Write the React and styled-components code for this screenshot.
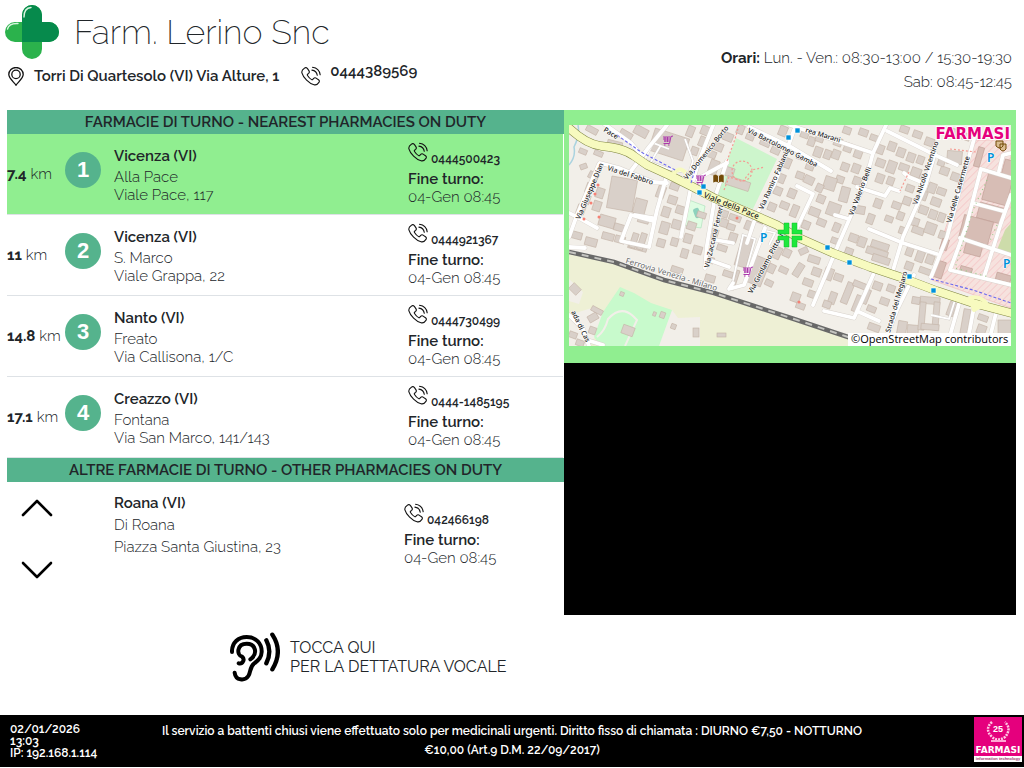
import React from "react";
import styled, { createGlobalStyle } from "styled-components";

const pharmacies = [
  { km: "7.4", city: "Vicenza (VI)", name: "Alla Pace", street: "Viale Pace, 117", phone: "0444500423" },
  { km: "11", city: "Vicenza (VI)", name: "S. Marco", street: "Viale Grappa, 22", phone: "0444921367" },
  { km: "14.8", city: "Nanto (VI)", name: "Freato", street: "Via Callisona, 1/C", phone: "0444730499" },
  { km: "17.1", city: "Creazzo (VI)", name: "Fontana", street: "Via San Marco, 141/143", phone: "0444-1485195" },
];

const PhoneIcon = () => (
  <svg width="20" height="20" viewBox="0 0 20 20" fill="none" stroke="#111" strokeWidth="1.1" strokeLinecap="round" strokeLinejoin="round">
    <path d="M3.4 2.2C4.6 1.2 5.7 1.5 6.5 2.6L8 4.9C8.6 5.9 8.4 6.7 7.6 7.4L6.6 8.2C6.2 8.6 6.2 9 6.5 9.5C7.5 11.1 8.9 12.6 10.6 13.6C11.1 13.9 11.5 13.8 11.8 13.4L12.7 12.4C13.4 11.7 14.1 11.6 15 12.1L17.5 13.7C18.5 14.4 18.6 15.4 17.9 16.4C16.8 18.2 15 19.2 13 18.7C10.4 18.1 7.8 16.3 5.6 14.1C3.3 11.8 1.5 9.1.9 6.8C.5 4.9 1.7 3.2 3.4 2.2Z" />
    <path d="M11.5 1.2C15.6 1.7 18.6 4.7 19.2 8.8M10.9 4.1C13.9 4.5 15.9 6.6 16.3 9.3" />
  </svg>
);

const PinIcon = () => (
  <svg width="16" height="19" viewBox="0 0 16 19" fill="none" stroke="#111" strokeWidth="1.3">
    <path d="M8 18.2C6.6 15.6.8 11.7.8 7.6A7.2 7.1 0 0 1 15.2 7.6C15.2 11.7 9.4 15.6 8 18.2Z" />
    <circle cx="8" cy="7.4" r="4.2" />
  </svg>
);

const CrossLogo = () => (
  <svg width="54" height="54" viewBox="0 0 54 54">
    <path d="M17 17V10A10 10 0 0 1 37 10V17H44A10 10 0 0 1 44 37H37V44A10 10 0 0 1 17 44V37H10A10 10 0 0 1 10 17Z" fill="#2bb24c" />
    <path d="M17 37V10A10 10 0 0 1 37 10V17H44A10 10 0 0 1 44 37Z" fill="#068a4c" />
    <path d="M19 12Q19 3 26 2.5M2.5 24Q4 18 13 18.5" fill="none" stroke="#d9f5df" strokeWidth="1.4" strokeLinecap="round" />
  </svg>
);

const EarIcon = () => (
  <svg width="50" height="50" viewBox="90 50 150 150" fill="none" stroke="#000" strokeWidth="12" strokeLinecap="round">
    <path d="M96 110C95 82 115 65 140 65C168 65 186 85 185 110C184 128 175 134 163 144C148 156 153 170 145 182C134 198 107 196 104 172" />
    <path d="M116 144C128 147 136 132 126 124C109 119 110 85 140 85C168 85 174 116 151 132" />
    <path d="M199 75Q217 108 199 144M217 58Q250 108 217 162" strokeWidth="13" />
  </svg>
);

const Chevron = ({ down }) => (
  <svg width="32" height="18" viewBox="0 0 32 18" fill="none" stroke="#000" strokeWidth="2.6" strokeLinecap="round" strokeLinejoin="round">
    <path d={down ? "M2 2L16 16L30 2" : "M2 16L16 2L30 16"} />
  </svg>
);

// minor streets of the map
const streets = [
  "M34 -2L62 18L72 30", "M30 39L8 90L0 112", "M31 38L50 43L84 57L98 58", "M62 46L80 22L98 0", "M0 88L12 94L28 103",
  "M98 50L88 85L80 122L52 116L62 90L84 96", "M66 90L84 93", "M145 -2L130 36L122 62L112 112", "M128 54L150 42L158 38",
  "M158 36L146 72L138 120L136 143", "M225 5L205 60L188 88L178 118", "M180 2L222 22L262 46", "M221 0L304 28L318 -2",
  "M304 28L296 58L270 118L244 180", "M318 6L366 30L388 40", "M366 28L356 62L334 112L322 152", "M405 14L392 60L378 112L362 152",
  "M228 61L244 69L228 103", "M288 62L316 71L321 63L330 66", "M335 48L340 52L352 57", "M300 104L334 118L368 129",
  "M266 90L280 94", "M305 148L285 193L255 186M290 187L310 196", "M345 150L328 185L314 221", "M392 172L380 214",
  "M405 182L398 220", "M428 184L422 208", "M196 103L175 160L160 164L164 158", "M0 122L16 123", "M0 190L14 204L20 221M18 215L34 220",
  "M147 115L164 118M143 136L160 142",
  "M412 44L442 53M412 44L397 102L381 145L442 160M404 78L434 86M391 113L424 124M442 70L432 98L415 152M424 124L442 130M442 28L434 30L430 46",
];

const parkingLines = "M74 38L84 18L100 24M80 40L92 20M78 36L100 44L120 48L124 36L116 14M96 50L112 54L128 48M162 165L174 110L186 114L176 150M194 105L206 108L200 120M386 175L380 194L362 190";

// x, y, width, height, rotation
const buildings = [
  [82, 8, 36, 23, 18], [40, 53, 26, 32, 10], [50, 6, 13, 9, 30], [65, 2, 14, 9, 28], [38, 16, 15, 8, 14], [17, 2, 12, 6, 28],
  [10, 24, 8, 5, 22], [25, 26, 9, 5, 22], [11, 39, 7, 5, -20], [21, 46, 7, 10, -62], [17, 58, 7, 10, 20], [14, 70, 7, 9, 20],
  [8, 80, 8, 9, 20], [27, 63, 8, 10, 18], [24, 76, 8, 10, 18], [30, 91, 16, 11, 16], [45, 99, 10, 7, 16], [65, 74, 12, 15, 15],
  [69, 91, 11, 7, 15], [3, 107, 10, 7, 15], [16, 113, 12, 8, 15], [33, 108, 12, 7, 15], [46, 111, 10, 7, 15], [59, 119, 19, 6, 15],
  [62, 108, 6, 15, 18], [70, 108, 6, 17, 18], [88, 61, 8, 12, 20], [101, 58, 9, 7, 20], [99, 71, 9, 8, 18], [107, 81, 9, 8, 18],
  [93, 82, 8, 10, 18], [91, 97, 9, 12, 16], [103, 95, 9, 9, 16], [88, 114, 8, 8, 16], [102, 113, 7, 8, 16], [115, 109, 8, 9, 16],
  [118, 97, 9, 8, 18], [128, 87, 9, 6, 18], [141, 104, 8, 9, 18], [151, 94, 8, 8, 18], [160, 108, 8, 9, 18], [148, 120, 10, 6, 18],
  [124, 121, 9, 8, 16], [112, 124, 7, 9, 16], [137, 132, 8, 6, 16], [140, 35, 9, 15, 20], [153, 42, 12, 9, 18], [157, 54, 24, 9, 18],
  [132, 1, 8, 9, 22], [118, 1, 7, 11, 22], [130, 12, 9, 10, 22], [122, 22, 7, 8, 20], [145, 18, 9, 8, 22], [154, 8, 10, 8, 22],
  [139, 26, 8, 7, 22], [168, 0, 7, 9, 22], [177, 9, 8, 6, 22], [191, 15, 10, 6, 24], [202, 22, 9, 7, 24], [210, 1, 8, 10, 22],
  [214, 33, 8, 10, 22], [209, 49, 7, 9, 22], [205, 62, 8, 8, 22], [199, 78, 8, 8, 22], [211, 77, 9, 7, 22], [219, 64, 8, 9, 22],
  [176, 96, 7, 9, 22], [187, 91, 8, 7, 22], [169, 112, 12, 30, 16], [181, 132, 16, 28, 22], [205, 122, 7, 12, 25], [199, 139, 7, 9, 25],
  [196, 155, 8, 6, 25], [210, 142, 9, 6, 25], [214, 124, 8, 8, 25], [102, 142, 12, 6, 18], [136, 150, 10, 7, 16],
  [149, 85, 10, 7, 18], [160, 90, 12, 6, 20], [158, 99, 8, 6, 18], [154, 146, 10, 6, 18], [165, 145, 3, 20, 18],
  [232, 4, 8, 9, 20], [239, 12, 7, 9, 20], [247, 8, 8, 9, 20], [245, 22, 8, 10, 20], [255, 25, 7, 9, 20], [263, 25, 8, 9, 20],
  [265, 13, 8, 8, 20], [275, 18, 8, 9, 20], [285, 25, 8, 8, 20], [290, 4, 9, 7, 20], [301, 10, 9, 6, 20], [274, 2, 8, 7, 20],
  [272, 38, 8, 8, 20], [283, 39, 8, 9, 20], [267, 51, 8, 7, 20], [255, 52, 12, 13, 18], [271, 62, 9, 15, 15], [284, 52, 8, 8, 20],
  [258, 78, 13, 13, 20], [228, 28, 9, 7, 20], [237, 37, 8, 8, 20], [227, 47, 8, 7, 20], [235, 51, 10, 8, 25], [247, 59, 7, 8, 25],
  [248, 70, 8, 8, 22], [240, 83, 11, 8, 22], [233, 96, 8, 8, 22], [248, 94, 9, 7, 22], [264, 98, 7, 9, 22], [222, 80, 7, 12, 22],
  [308, 20, 7, 9, 20], [319, 17, 8, 9, 20], [328, 23, 8, 9, 20], [338, 28, 8, 9, 20], [348, 31, 7, 8, 20], [307, 34, 9, 8, 20],
  [318, 36, 9, 12, 20], [330, 39, 10, 7, 20], [342, 43, 10, 9, 20], [350, 50, 9, 8, 20], [307, 49, 8, 9, 20], [318, 52, 7, 8, 20],
  [337, 60, 8, 7, 20], [334, 72, 8, 8, 20], [323, 77, 9, 7, 20], [305, 74, 8, 9, 20], [287, 81, 9, 8, 10], [298, 89, 7, 10, 20],
  [316, 91, 8, 6, 20], [328, 87, 7, 8, 20], [330, 102, 7, 7, 20], [350, 66, 8, 9, 20], [359, 58, 8, 10, 20], [368, 63, 9, 7, 20],
  [362, 73, 10, 8, 20], [350, 81, 9, 8, 20], [360, 85, 8, 9, 20], [342, 93, 8, 8, 20], [343, 102, 12, 7, 20], [356, 98, 11, 11, 20],
  [369, 88, 7, 9, 20], [370, 106, 7, 8, 20], [371, 42, 9, 8, 20], [382, 48, 9, 8, 20], [378, 26, 15, 13, 5], [369, 33, 7, 8, 20],
  [378, 3, 10, 7, 20], [392, 8, 9, 7, 20], [356, 13, 9, 8, 20], [344, 6, 9, 7, 20], [331, 1, 9, 7, 20], [302, 117, 18, 7, 18],
  [297, 124, 22, 7, 18], [303, 131, 18, 7, 18], [280, 109, 9, 8, 20], [289, 112, 8, 10, 20], [276, 123, 8, 7, 20], [285, 135, 9, 7, 20],
  [262, 113, 9, 6, 20], [337, 122, 7, 9, 20], [347, 126, 8, 11, 20], [357, 130, 8, 9, 20], [336, 137, 8, 8, 20], [350, 143, 12, 6, 20],
  [230, 123, 9, 6, -25], [226, 138, 7, 14, 32], [239, 131, 12, 7, 18], [243, 143, 9, 8, 20], [234, 154, 10, 7, 20], [222, 168, 9, 9, 20],
  [239, 166, 9, 7, 20], [227, 178, 9, 6, 20], [255, 143, 9, 12, 20], [265, 149, 9, 7, 20], [260, 167, 7, 12, 20], [254, 176, 8, 7, 20],
  [275, 157, 7, 22, 22], [284, 157, 14, 6, 22], [285, 170, 6, 17, 22], [294, 164, 6, 15, 22], [298, 181, 9, 6, 22], [311, 173, 9, 7, 20],
  [304, 157, 9, 8, 20], [318, 160, 8, 7, 20], [299, 199, 12, 7, 20], [328, 196, 9, 20, 10], [338, 200, 11, 18, 5], [351, 172, 20, 7, 5],
  [350, 177, 6, 28, 5], [364, 177, 6, 28, 5], [352, 199, 18, 6, 5], [343, 172, 8, 7, 10], [379, 177, 7, 14, 20], [393, 184, 7, 25, 10],
  [409, 190, 10, 6, 20], [408, 200, 9, 9, 20], [429, 195, 13, 14, 0], [1, 160, 10, 8, 45], [19, 189, 10, 7, -30], [22, 183, 12, 5, 28],
  [20, 202, 7, 7, 20], [0, 207, 8, 6, 20], [7, 215, 8, 6, 20], [53, 201, 12, 9, 20], [51, 167, 4, 4, 20], [84, 187, 3, 4, 20],
  [91, 187, 5, 6, 20], [102, 199, 5, 5, 20], [124, 203, 6, 9, 0], [148, 208, 9, 4, 0],
];

const barracks = [
  [416, 49, 25, 29, 15], [409, 80, 25, 16, 15], [392, 93, 30, 24, 15], [396, 116, 17, 14, 15], [366, 136, 9, 17, 18],
  [372, 114, 7, 11, 18], [407, 22, 6, 20, 16], [434, 35, 10, 17, 15], [391, 142, 12, 6, 16], [427, 149, 15, 7, 16],
];

const labels = [
  ["Pace", 34, 6, 32], ["Via del Fabbro", 38, 45, 18], ["Via Giuseppe Dian", 11, 95, -67], ["Via Domenico Borto", 118, 55, -51],
  ["Via Bartolomeo Gamba", 178, 7, 27], ["rea Marani", 236, 7, 17], ["Via Ramiro Fabiani", 194, 85, -66],
  ["Via Valerio Belli", 284, 91, -69], ["Via Nicolò Vicentino", 348, 80, -71],
  ["Via delle Casermette", 382, 98, -74], ["Via Zaccaria Ferreri", 140, 143, -77], ["Via Girolamo Pittoni", 183, 169, -62],
  ["Strada del Megiaro", 321, 208, -74], ["ada di Cas", 2, 187, 64],
];

const stops = [[132, 59], [128, 65], [217, 10], [226, 3], [256, 120], [278, 135], [338, 149], [362, 163]];
const shops = [[94, 10], [127, 49], [174, 141]];
const redMarks = [[29, 60], [26, 69], [22, 78], [15, 94], [30, 92], [168, 93], [230, 177]];

const mainRoad = "M-4 0L0 3Q17 19 32 21Q55 23 65 31L78 40L102 51L122 61L145 73L178 87L208 100L228 112L264 128L301 142L331 152L368 166L404 178L446 189";
const railway = "M0 127L45 137L95 155L145 168L225 194L279 212L330 228";

const block = ([x, y, w, h, r], i) => (
  <rect key={i} x={x} y={y} width={w} height={h} transform={`rotate(${r} ${x + w / 2} ${y + h / 2})`} />
);

const StreetMap = () => (
  <MapDrawing viewBox="0 0 442 221" role="img" aria-label="Mappa">
    <defs>
      <pattern id="hatch" width="5" height="5" patternUnits="userSpaceOnUse" patternTransform="rotate(45)">
        <rect width="5" height="5" fill="#f6e2de" />
        <rect width="1" height="5" fill="#f5cccc" />
      </pattern>
    </defs>
    <rect width="442" height="221" fill="#f2efe9" />
    <path d="M0 128L45 139L95 157L145 170L225 196L305 221H0Z" fill="#eef0d5" />
    <path d="M0 154L14 167L10 179L0 176ZM26 182L38 189L26 212L20 221H0V190ZM103 185L109 193L131 192V221H88Z" fill="#f2efe9" />
    <path d="M51 162L65 168L82 178L103 185L90 221H32L25 212L34 187Z" fill="#c8facc" />
    <path d="M28 212Q36 206 39 194Q52 180 64 191L68 195L56 221" fill="none" stroke="#f2efe9" strokeWidth="2" />
    <path d="M9 0Q11 10 5 22Q7 32 0 40" fill="none" stroke="#aad3df" strokeWidth="1.5" />
    <path d="M167 13L208 34L184 84L144 70L158 36Z" fill="#cdf5cc" />
    <path d="M120 75L136 81L132 103L113 100Z" fill="#dffce2" stroke="#9ddab0" strokeWidth=".5" />
    <rect x="125" y="83" width="6" height="10" rx="2" fill="#8dd2bd" transform="rotate(-20 128 88)" />
    <path d="M406 15L442 15V183L363 155L376 105L393 55Z" fill="url(#hatch)" stroke="#f0b6b6" strokeWidth=".6" />
    <path d="M442 98L436 105L428 125L442 128Z" fill="#cddcaa" />
    <g fill="#d9d0c9" stroke="#c4b3a6" strokeWidth=".6">{buildings.map(block)}</g>
    <g fill="#d7bdb5" stroke="#bf9e94" strokeWidth=".6">{barracks.map(block)}</g>
    <path d={parkingLines} fill="none" stroke="#d0ccc8" strokeWidth="2.6" />
    <path d={parkingLines} fill="none" stroke="#fff" strokeWidth="1.8" />
    <g fill="none" strokeLinejoin="round" strokeLinecap="round">
      {streets.map((d) => <path key={d} d={d} stroke="#d8d2cc" strokeWidth="4.6" />)}
      {streets.map((d) => <path key={d} d={d} stroke="#fff" strokeWidth="3.8" />)}
      <path d={mainRoad} stroke="#7f8540" strokeWidth="8.8" />
      <path d={mainRoad} stroke="#f7fabf" strokeWidth="7.8" />
      <path d="M105 48Q112 40 118 50L120 57M401 173Q411 170 417 178L405 185Z" stroke="#f7fabf" strokeWidth="4" />
    </g>
    <path d="M48 10L72 27L108 46M122 58L128 38M362 154L404 165L442 178" fill="none" stroke="#6a68ee" strokeWidth="1.1" strokeDasharray="3 2" />
    <path d="M170 0L166 14L158 36M155 65L160 52L174 56L183 45L196 42M340 47L331 66M381 24L407 27" fill="none" stroke="#f49b92" strokeWidth="1.2" strokeDasharray="2 2" />
    <circle cx="173" cy="46" r="10" fill="none" stroke="#f49b92" strokeWidth="1.2" strokeDasharray="2 2" />
    <path d="M418 55L404 85L386 143L420 152M428 100L420 118" fill="none" stroke="#9acb8d" strokeWidth="1.2" strokeDasharray="1 4" />
    <path d={railway} fill="none" stroke="#686868" strokeWidth="4.6" />
    <path d={railway} fill="none" stroke="#c4c4c0" strokeWidth="2" strokeDasharray="7 6" />
    <g fontFamily="Noto Sans, sans-serif" fontSize="7" fontWeight="500" fill="#222" stroke="#fff" strokeWidth="1.2" paintOrder="stroke" strokeLinejoin="round">
      {labels.map(([name, x, y, r]) => (
        <text key={name} transform={`translate(${x} ${y}) rotate(${r})`}>{name}</text>
      ))}
      <text transform="translate(134 72) rotate(22)" fontSize="8" stroke="#f7fabf">Viale della Pace</text>
      <text transform="translate(56 138) rotate(17)" fontSize="8" fill="#777">Ferrovia Venezia - Milano</text>
    </g>
    <g fill="#0092da" stroke="#fff" strokeWidth=".6">
      {stops.map(([x, y]) => <rect key={x} x={x} y={y} width="5" height="5" />)}
    </g>
    <g fill="none" stroke="#ac39ac" strokeWidth="1">
      {shops.map(([x, y]) => (
        <path key={x} d={`M${x + 10} ${y + 1}l-2 .5l-1.5 7h-6M${x} ${y + 2}h7.5M${x} ${y + 4}h7M${x + 1} ${y + 6}h6M${x + 2} ${y + 2}v5M${x + 4.5} ${y + 2}v5M${x + 1} ${y + 10}h1.5M${x + 5} ${y + 10}h1.5`} />
      ))}
    </g>
    <g fill="#f58074">{redMarks.map(([x, y]) => <circle key={y} cx={x} cy={y} r="1.5" />)}</g>
    <path d="M144 50Q147 48 149.5 51Q152 48 155 50V58Q152 56 149.5 58Q147 56 144 58Z" fill="#734a08" stroke="#fff" strokeWidth=".5" />
    <path d="M149.5 51V57" stroke="#fff" strokeWidth=".8" />
    <path d="M427 16h7v5q-3 4-7 0ZM431 19h6v5q-3 4-6 0Z" fill="#d9bc91" stroke="#734a08" />
    <g fontFamily="Noto Sans, sans-serif" fontWeight="600" fontSize="12" fill="#0092da" stroke="#fff" strokeWidth="1" paintOrder="stroke">
      <text x="191" y="117">P</text>
      <text x="418" y="37">P</text>
      <text x="434" y="143">P</text>
    </g>
    <path d="M215 98h5v11h-11v-4h6ZM223 98h5v7h5v4h-10ZM209 111h11v11h-5v-7h-6ZM223 111h10v4h-5v7h-5Z" fill="#1ee83c" stroke="#12b82e" strokeWidth=".5" />
    <text x="441" y="14" textAnchor="end" fontFamily="DejaVu Sans, sans-serif" fontWeight="700" fontSize="15" fill="#e5007d" stroke="#fff" strokeWidth="2" paintOrder="stroke">FARMASI</text>
    <rect x="279" y="208" width="163" height="13" fill="#fff" />
    <text x="282" y="218" fontFamily="Open Sans, sans-serif" fontSize="11" fontWeight="500" fill="#000">©OpenStreetMap contributors</text>
  </MapDrawing>
);

const PhoneBlock = ({ phone, wide }) => (
  <Contact $wide={wide}>
    <PhoneLine>
      <PhoneIcon />
      <PhoneLink href={`tel:${phone}`}>{phone}</PhoneLink>
    </PhoneLine>
    <Strong>Fine turno:</Strong>
    <Line>04-Gen 08:45</Line>
  </Contact>
);

const App = () => (
  <Page>
    <GlobalStyle />
    <Header>
      <div>
        <Brand>
          <CrossLogo />
          <Title>Farm. Lerino Snc</Title>
        </Brand>
        <Address>
          <PinIcon />
          <span>Torri Di Quartesolo (VI) Via Alture, 1</span>
          <HeaderPhone href="tel:0444389569">
            <PhoneIcon />
            <span>0444389569</span>
          </HeaderPhone>
        </Address>
      </div>
      <Hours>
        <div><b>Orari:</b> Lun. - Ven.: 08:30-13:00 / 15:30-19:30</div>
        <div>Sab: 08:45-12:45</div>
      </Hours>
    </Header>
    <Main>
      <section>
        <SectionTitle>FARMACIE DI TURNO - NEAREST PHARMACIES ON DUTY</SectionTitle>
        {pharmacies.map((item, i) => (
          <Row key={item.phone} $active={i === 0}>
            <Distance><b>{item.km}</b> km</Distance>
            <Badge>{i + 1}</Badge>
            <Info>
              <City>{item.city}</City>
              <Line>{item.name}</Line>
              <Line>{item.street}</Line>
            </Info>
            <PhoneBlock phone={item.phone} />
          </Row>
        ))}
        <SectionTitle>ALTRE FARMACIE DI TURNO - OTHER PHARMACIES ON DUTY</SectionTitle>
        <OtherRow>
          <Arrows>
            <PlainButton aria-label="Precedente"><Chevron /></PlainButton>
            <PlainButton aria-label="Successiva"><Chevron down /></PlainButton>
          </Arrows>
          <OtherInfo>
            <Strong>Roana (VI)</Strong>
            <div>Di Roana</div>
            <div>Piazza Santa Giustina, 23</div>
          </OtherInfo>
          <PhoneBlock phone="042466198" wide />
        </OtherRow>
      </section>
      <MapColumn>
        <MapFrame>
          <StreetMap />
        </MapFrame>
        <VideoBox />
      </MapColumn>
    </Main>
    <VoiceButton>
      <EarIcon />
      <span>TOCCA QUI<br />PER LA DETTATURA VOCALE</span>
    </VoiceButton>
    <Footer>
      <Clock>
        <div>02/01/2026</div>
        <div>13:03</div>
        <div>IP: 192.168.1.114</div>
      </Clock>
      <Notice>
        Il servizio a battenti chiusi viene effettuato solo per medicinali urgenti. Diritto fisso di chiamata : DIURNO €7,50 - NOTTURNO €10,00 (Art.9 D.M. 22/09/2017)
      </Notice>
      <FooterLogo>
        <svg width="48" height="45" viewBox="0 0 48 45">
          <rect width="48" height="45" fill="#e5007d" />
          <path d="M18 5Q10 12 18 20Q24 25 31 20Q38 12 31 5" fill="none" stroke="#ffc7e4" strokeWidth="2.5" strokeDasharray="2 1" />
          <text x="24" y="15" textAnchor="middle" fontFamily="Liberation Sans, sans-serif" fontSize="9" fill="#fff">25</text>
          <path d="M17 24H32" stroke="#ffa6d4" strokeWidth="2" />
          <text x="24" y="36" textAnchor="middle" fontFamily="DejaVu Sans, sans-serif" fontWeight="700" fontSize="9" fill="#fff">FARMASI</text>
          <rect y="39" width="48" height="6" fill="#fff" />
          <text x="24" y="43" textAnchor="middle" fontFamily="Liberation Sans, sans-serif" fontSize="4" fontWeight="700" fill="#a13a70">information technology</text>
        </svg>
      </FooterLogo>
    </Footer>
  </Page>
);

const GlobalStyle = createGlobalStyle`
  * {
    box-sizing: border-box;
  }

  body {
    margin: 0;
    background: #fff;
    color: #212529;
    font-family: Raleway, Lato, sans-serif;
    font-size: 15px;
    font-weight: 300;
    line-height: 18px;
  }

  b {
    font-weight: 700;
  }

  a {
    color: inherit;
    text-decoration: none;
  }

  svg {
    display: block;
    flex: none;
  }
`;

const Page = styled.div`
  display: flex;
  flex-direction: column;
  min-height: 100vh;
  padding-bottom: 1px;
`;

const Header = styled.header`
  display: flex;
  justify-content: space-between;
  height: 110px;
  padding: 5px 12px 0 5px;
`;

const Brand = styled.div`
  display: flex;
  align-items: center;
  gap: 15px;
`;

const Title = styled.h1`
  margin: 0;
  font-size: 34px;
  font-weight: 200;
  line-height: 44px;
`;

const Address = styled.div`
  display: flex;
  align-items: center;
  gap: 10px;
  height: 20px;
  margin-top: 7px;
  padding-left: 3px;
  font-weight: 600;
`;

const HeaderPhone = styled.a`
  display: flex;
  gap: 9px;
  margin-left: 12px;
  line-height: 10px;
`;

const Hours = styled.div`
  padding-top: 41px;
  line-height: 24px;
  text-align: right;
`;

const Main = styled.main`
  display: grid;
  grid-template-columns: 557fr 452fr;
  padding: 0 8px 0 7px;
`;

const SectionTitle = styled.h2`
  margin: 0;
  background: #55b38d;
  font-size: 15px;
  font-weight: 600;
  line-height: 24px;
  text-align: center;
`;

const Row = styled.article`
  display: grid;
  grid-template-columns: 58px 49px 1fr 155px;
  height: 81px;
  margin-right: 1px;
  border-bottom: 1px solid #dee2e6;
  background: ${({ $active }) => ($active ? "#90ee90" : "#fff")};
`;

const Distance = styled.div`
  align-self: center;
  white-space: nowrap;
`;

const Badge = styled.div`
  width: 36px;
  height: 36px;
  margin-top: 18px;
  border-radius: 50%;
  background: #55b38d;
  color: #fff;
  font-family: "Liberation Sans", Arial, sans-serif;
  font-size: 22px;
  font-weight: 700;
  line-height: 36px;
  text-align: center;
`;

const Info = styled.div`
  padding-top: 10px;
`;

const City = styled.div`
  font-weight: 600;
  line-height: 24px;
`;

const Strong = styled.div`
  font-weight: 600;
`;

const Line = styled.div`
  line-height: 18px;
`;

const Contact = styled.div`
  padding-top: ${({ $wide }) => ($wide ? "21px" : "8px")};
`;

const PhoneLine = styled.div`
  display: flex;
  align-items: flex-start;
  gap: 3px;
  height: 28px;
`;

const PhoneLink = styled.a`
  padding-top: 8px;
  font-size: 12px;
  font-weight: 600;
`;

const OtherRow = styled.article`
  display: grid;
  grid-template-columns: 107px 1fr 160px;
`;

const Arrows = styled.div`
  display: flex;
  flex-direction: column;
  align-items: flex-start;
  gap: 44px;
  padding: 17px 0 0 14px;
`;

const OtherInfo = styled.div`
  padding-top: 10px;
  line-height: 22px;
`;

const PlainButton = styled.button`
  padding: 0;
  border: 0;
  background: none;
  cursor: pointer;
`;

const MapColumn = styled.aside`
  display: flex;
  flex-direction: column;
`;

const MapFrame = styled.div`
  padding: 15px 5px 17px;
  background: #90ee90;
`;

const MapDrawing = styled.svg`
  width: 100%;
  height: auto;
`;

const VideoBox = styled.div`
  height: 252px;
  background: #000;
`;

const VoiceButton = styled.button`
  display: flex;
  align-items: center;
  gap: 10px;
  align-self: flex-start;
  margin: 17px 0 33px 230px;
  padding: 0;
  border: 0;
  background: none;
  color: #212529;
  font-family: inherit;
  font-size: 16px;
  font-weight: 400;
  line-height: 19px;
  text-align: left;
  cursor: pointer;
`;

const Footer = styled.footer`
  display: grid;
  grid-template-columns: 150px 1fr 150px;
  height: 52px;
  margin-top: auto;
  background: #000;
  color: #fff;
  font-size: 12px;
  font-weight: 600;
`;

const Clock = styled.div`
  padding: 8px 0 0 10px;
  line-height: 12px;
`;

const Notice = styled.p`
  margin: 0;
  padding-top: 7px;
  line-height: 19px;
  text-align: center;
`;

const FooterLogo = styled.div`
  display: flex;
  justify-content: flex-end;
  padding: 2px 2px 0 0;
`;

export default App;
